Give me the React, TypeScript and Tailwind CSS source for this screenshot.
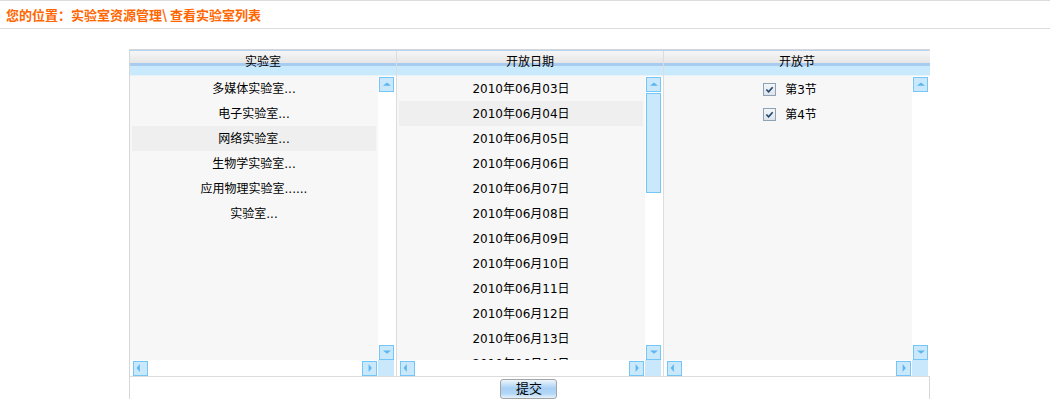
import type { ReactNode } from 'react'

type Dir = 'up' | 'down' | 'left' | 'right'

const labs = ['多媒体实验室...', '电子实验室...', '网络实验室...', '生物学实验室...', '应用物理实验室......', '实验室...']
const dates = ['03', '04', '05', '06', '07', '08', '09', '10', '11', '12', '13', '14'].map((d) => `2010年06月${d}日`)
const periods = ['第3节', '第4节']

function Arrow({ dir }: { dir: Dir }) {
  const pts = {
    up: '1,6 5,2 9,6',
    down: '1,2 9,2 5,6',
    left: '6,1 6,9 2,5',
    right: '2,1 2,9 6,5',
  }[dir]
  const box = dir === 'up' || dir === 'down' ? 'w-[10px] h-[8px]' : 'w-[8px] h-[10px]'
  const pos = dir === 'left' ? 'justify-start pl-[1px]' : dir === 'right' ? 'justify-end pr-[1px]' : 'justify-center'
  return (
    <div className={`flex h-[15px] w-[15px] items-center border border-[#74c6f8] bg-[#c9e8fc] ${pos}`}>
      <svg viewBox="0 0 10 10" className={box} preserveAspectRatio="none">
        <polygon points={pts} fill="#5cb6f0" />
      </svg>
    </div>
  )
}

function Checkbox() {
  return (
    <div className="flex h-[13px] w-[13px] items-center justify-center border border-[#8da2b5] bg-[linear-gradient(to_bottom,#f4f6f8,#dde3ea)]">
      <svg viewBox="0 0 10 10" className="h-[9px] w-[9px]">
        <path d="M1.5 5 L4 7.5 L8.5 2.5" fill="none" stroke="#21466f" strokeWidth="1.8" />
      </svg>
    </div>
  )
}

function Column({
  title,
  first,
  thumb,
  children,
}: {
  title: string
  first?: boolean
  thumb?: boolean
  children: ReactNode
}) {
  return (
    <div className={`flex flex-col ${first ? '' : 'border-l border-[#dcdcdc]'}`}>
      <div className="h-[25px] bg-[linear-gradient(to_bottom,#f6f6f6_0px,#e6e6e6_12px,#a8ccf0_12px,#a8ccf0_15px,#c9e9fd_15px,#c9e9fd_24px,#e8f2f8_24px)] pt-[4px] text-center text-[12px] leading-[14px] text-black">
        {title}
      </div>
      <div className="flex h-[284px]">
        <div className="w-[248px] overflow-hidden bg-[#f7f7f7] px-[2px]">{children}</div>
        <div className="flex w-[16px] flex-col bg-white pl-[1px] pt-[1px]">
          <Arrow dir="up" />
          {thumb ? (
            <div className="mt-[1px] h-[100px] w-[15px] border border-[#74c6f8] bg-[#c9e8fc]" />
          ) : null}
          <div className="flex-1" />
          <Arrow dir="down" />
        </div>
        <div className="w-[2px] bg-white" />
      </div>
      <div className="flex h-[16px]">
        <div className="flex w-[248px] items-center justify-between bg-white pl-[3px] pr-[1px]">
          <Arrow dir="left" />
          <Arrow dir="right" />
        </div>
        <div className="w-[16px] bg-[#c9e8fc]" />
        <div className="w-[2px] bg-white" />
      </div>
    </div>
  )
}

export default function App() {
  return (
    <div className="h-[399px] w-[1050px] overflow-hidden bg-white font-['DejaVu_Sans','Noto_Sans_CJK_SC',sans-serif] text-[12px] text-black">
      <div className="flex h-[29px] items-center border-y border-[#dcdcdc] pl-[6px] font-['Noto_Sans_CJK_SC',sans-serif] text-[13px] font-bold text-[#ff6600]">
        您的位置：实验室资源管理\ 查看实验室列表
      </div>

      <div className="ml-[129px] mt-[20px] w-[801px] border-x border-t border-[#d4d8dc]">
        <div className="h-px bg-[#b4d4f2]" />
        <div className="flex">
          <Column title="实验室" first>
            {labs.map((l, i) => (
              <div
                key={l}
                className={`flex h-[25px] items-center justify-center ${i === 2 ? 'bg-[#efefef]' : ''}`}
              >
                {l}
              </div>
            ))}
          </Column>
          <Column title="开放日期" thumb>
            {dates.map((d, i) => (
              <div
                key={d}
                className={`flex h-[25px] items-center justify-center ${i === 1 ? 'bg-[#efefef]' : ''}`}
              >
                {d}
              </div>
            ))}
          </Column>
          <Column title="开放节">
            <div className="pt-[1px]">
              {periods.map((p) => (
                <div key={p} className="flex h-[25px] items-center justify-center gap-[9px] pl-[4px]">
                  <Checkbox />
                  <span>{p}</span>
                </div>
              ))}
            </div>
          </Column>
        </div>
        <div className="flex h-[23px] justify-center border-t border-[#dcdcdc] pt-[2px] pr-[3px]">
          <button
            type="button"
            className="h-[20px] w-[57px] rounded-[3px] border border-[#a4a4a4] bg-[linear-gradient(to_bottom,#eef6fd,#a9d0f4_45%,#b2d6f6_75%,#e6f2fc)] pl-[2px] text-[13px] leading-[16px] text-black"
          >
            提交
          </button>
        </div>
      </div>
    </div>
  )
}
